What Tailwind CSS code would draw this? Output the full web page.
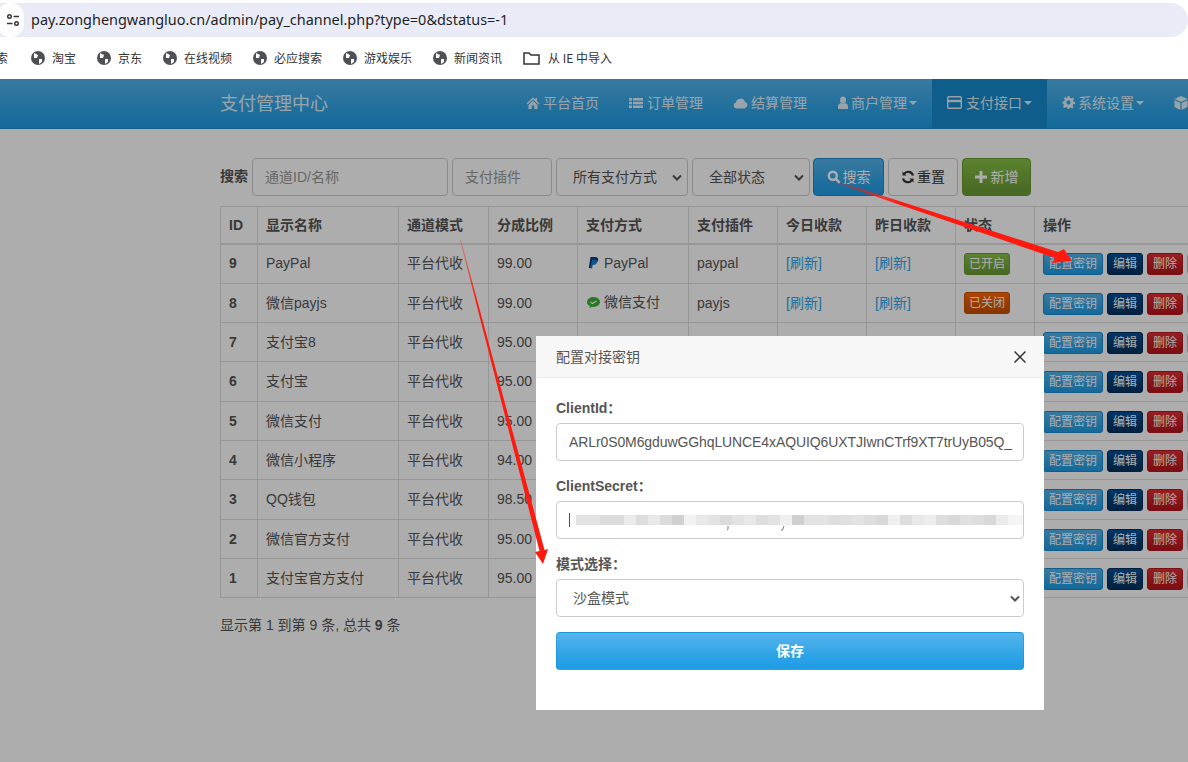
<!DOCTYPE html>
<html lang="zh">
<head>
<meta charset="utf-8">
<script src="https://cdn.jsdelivr.net/npm/@tailwindcss/browser@4"></script>
</head>
<body class="bg-white">
<div class="w-[1188px] h-[762px] overflow-hidden relative flex flex-col font-['Liberation_Sans','Noto_Sans_CJK_SC',sans-serif] text-[14px] text-[#555555]">
  <!-- browser chrome -->
  <div class="h-[79px] shrink-0 bg-white flex flex-col">
    <div class="mt-[3px] h-[34px] bg-[#e9ecf7] rounded-r-[17px] flex items-center font-['Noto_Sans','Noto_Sans_CJK_SC',sans-serif] text-[14.45px] text-[#1f1f1f]">
      <div class="w-[27px] h-[34px] -ml-[3px] bg-white rounded-full flex items-center justify-center">
        <svg class="w-[16px] h-[16px] ml-[4px]" viewBox="0 0 16 16" fill="none" stroke="#333" stroke-width="1.4"><circle cx="4.5" cy="4.5" r="1.8"/><path d="M8.5 4.5H14M2 11.5H7.5"/><circle cx="11.5" cy="11.5" r="1.8"/></svg>
      </div>
      <span class="ml-[7px]">pay.zonghengwangluo.cn/admin/pay_channel.php?type=0&amp;dstatus=-1</span>
    </div>
    <div class="h-[42px] flex items-center text-[12px] text-[#333] -ml-[2px] font-['Noto_Sans_CJK_SC',sans-serif]">
      <span class="w-[35px] -ml-[2px] shrink-0">索</span>
      <span class="flex items-center gap-[7px] w-[66px]"><svg class="w-[14px] h-[14px]" viewBox="0 0 14 14"><circle cx="7" cy="7" r="7" fill="#4d5156"/><path d="M3 2l4 2-1 3-3 0zM8 8l3 0 0 3-3 2z" fill="#fff"/></svg>淘宝</span>
      <span class="flex items-center gap-[7px] w-[66px]"><svg class="w-[14px] h-[14px]" viewBox="0 0 14 14"><circle cx="7" cy="7" r="7" fill="#4d5156"/><path d="M3 2l4 2-1 3-3 0zM8 8l3 0 0 3-3 2z" fill="#fff"/></svg>京东</span>
      <span class="flex items-center gap-[7px] w-[90px]"><svg class="w-[14px] h-[14px]" viewBox="0 0 14 14"><circle cx="7" cy="7" r="7" fill="#4d5156"/><path d="M3 2l4 2-1 3-3 0zM8 8l3 0 0 3-3 2z" fill="#fff"/></svg>在线视频</span>
      <span class="flex items-center gap-[7px] w-[90px]"><svg class="w-[14px] h-[14px]" viewBox="0 0 14 14"><circle cx="7" cy="7" r="7" fill="#4d5156"/><path d="M3 2l4 2-1 3-3 0zM8 8l3 0 0 3-3 2z" fill="#fff"/></svg>必应搜索</span>
      <span class="flex items-center gap-[7px] w-[90px]"><svg class="w-[14px] h-[14px]" viewBox="0 0 14 14"><circle cx="7" cy="7" r="7" fill="#4d5156"/><path d="M3 2l4 2-1 3-3 0zM8 8l3 0 0 3-3 2z" fill="#fff"/></svg>游戏娱乐</span>
      <span class="flex items-center gap-[7px] w-[90px]"><svg class="w-[14px] h-[14px]" viewBox="0 0 14 14"><circle cx="7" cy="7" r="7" fill="#4d5156"/><path d="M3 2l4 2-1 3-3 0zM8 8l3 0 0 3-3 2z" fill="#fff"/></svg>新闻资讯</span>
      <span class="flex items-center gap-[8px]"><svg class="w-[17px] h-[14px]" viewBox="0 0 17 14" fill="none" stroke="#333" stroke-width="1.5"><path d="M1 2h5l2 2h8v9H1z"/></svg>从 IE 中导入</span>
    </div>
  </div>
  <!-- page -->
  <div class="relative flex-1">
    <nav class="h-[50px] pl-[220px] flex items-center whitespace-nowrap bg-linear-to-b from-[#54b4eb] via-[#2fa4e7] via-60% to-[#1d9ce5] border-b border-[#178acc] text-[14px] text-white/85 font-['Noto_Sans_CJK_SC',sans-serif] [&>a]:shrink-0 [&>a]:h-full [&>a]:px-[15px] [&>a]:pb-[2px] [&>a]:flex [&>a]:items-center">
      <span class="text-[18px] w-[291px] shrink-0 pb-[3px]">支付管理中心</span>
      <a><svg class="w-[14px] h-[14px] mr-[3px]" viewBox="0 0 14 14" fill="currentColor"><path d="M7 1.5L0.5 7.5l1 1L7 3.5l5.5 5 1-1-2.5-2.3V2h-1.5v1.8zM2.5 9v4h3.2V9.5h2.6V13h3.2V9L7 4.8z"/></svg>平台首页</a>
      <a><svg class="w-[14px] h-[14px] mr-[4px]" viewBox="0 0 14 14" fill="currentColor"><path d="M0 2h3v2.4H0zM4 2h10v2.4H4zM0 5.8h3v2.4H0zM4 5.8h10v2.4H4zM0 9.6h3V12H0zM4 9.6h10V12H4z"/></svg>订单管理</a>
      <a><svg class="w-[15px] h-[14px] mr-[3px]" viewBox="0 0 15 14" fill="currentColor"><path d="M3.5 12.5a3 3 0 0 1-.6-5.9 4.6 4.6 0 0 1 8.9-.9A3.5 3.5 0 0 1 11.5 12.5z"/></svg>结算管理<i class="w-px"></i></a>
      <a><svg class="w-[10px] h-[14px] mr-[3px]" viewBox="0 0 10 14" fill="currentColor"><ellipse cx="5" cy="4" rx="3" ry="3.6"/><path d="M0 13V10c0-1.5 1.5-2.5 3-3 1 .8 3 .8 4 0 1.500.5 3 1.500 3 3v3z"/></svg>商户管理<i class="ml-[2px] w-0 h-0 border-x-[4px] border-x-transparent border-t-[4px] border-t-white/85"></i></a>
      <a class="bg-[#178acc]"><svg class="w-[15px] h-[13px] mr-[4px]" viewBox="0 0 15 13" fill="none" stroke="currentColor" stroke-width="1.400"><rect x="0.700" y="0.700" width="13.600" height="11.600" rx="1"/><path d="M1 5h13" stroke-width="2.400"/></svg>支付接口<i class="ml-[2px] w-0 h-0 border-x-[4px] border-x-transparent border-t-[4px] border-t-white/85"></i></a>
      <a><svg class="w-[13px] h-[13px] mr-[3px]" viewBox="0 0 14 14" fill="currentColor"><path fill-rule="evenodd" d="M6 0h2l.4 2 1.500.6L11.600 1.500 13 3l-1.100 1.700.6 1.400 1.500.4v2l-2 .4-.6 1.500 1.100 1.700L11 13.500l-1.700-1.100-1.300.6L7.600 14h-1.500l-.4-1.500-1.500-.6-1.700 1.100L1 11.600l1.100-1.700-.6-1.500L.5 8V6l2-.4.6-1.500L2 2.400 3.400 1l1.700 1.100L6 1.800zM7 4.700a2.300 2.300 0 1 0 0 4.600 2.300 2.300 0 0 0 0-4.600z"/></svg>系统设置<i class="ml-[2px] w-0 h-0 border-x-[4px] border-x-transparent border-t-[4px] border-t-white/85"></i></a>
      <a><svg class="w-[14px] h-[14px]" viewBox="0 0 14 14" fill="currentColor"><path d="M7 0l6.500 3L7 6 .5 3zM.5 4.200L6.400 7v7L.5 11zM13.500 4.200L7.600 7v7l5.900-3z"/></svg></a>
    </nav>
    <main class="pl-[220px] pt-[29px] w-[1400px]">
      <form class="flex items-center h-[38px] text-[14px]">
        <label class="font-bold mr-[4px] w-[28px] pb-[2px]">搜索</label>
        <div class="w-[196px] h-[38px] mr-[4px] border border-[#ccc] rounded-[4px] flex items-center pl-[12px] text-[#999]">通道ID/名称</div>
        <div class="w-[100px] h-[38px] mr-[4px] border border-[#ccc] rounded-[4px] flex items-center pl-[12px] text-[#999]">支付插件</div>
        <div class="w-[132px] h-[38px] mr-[4px] border border-[#ccc] rounded-[4px] flex items-center justify-between pl-[16px] pr-[5px]">所有支付方式<svg class="w-[10px] h-[7px]" viewBox="0 0 10 7" fill="none" stroke="#555" stroke-width="2"><path d="M1 1.500l4 4 4-4"/></svg></div>
        <div class="w-[118px] h-[38px] mr-[3px] border border-[#ccc] rounded-[4px] flex items-center justify-between pl-[16px] pr-[5px]">全部状态<svg class="w-[10px] h-[7px]" viewBox="0 0 10 7" fill="none" stroke="#555" stroke-width="2"><path d="M1 1.500l4 4 4-4"/></svg></div>
        <div class="w-[71px] h-[38px] mr-[4px] rounded-[4px] border border-[#178acc] bg-linear-to-b from-[#54b4eb] via-[#2fa4e7] via-60% to-[#1d9ce5] text-white flex items-center justify-center gap-[2px]"><svg class="w-[14px] h-[14px]" viewBox="0 0 14 14" fill="none" stroke="currentColor" stroke-width="2.400"><circle cx="5.800" cy="5.800" r="4"/><path d="M8.800 8.800l4 4"/></svg>搜索</div>
        <div class="w-[70px] h-[38px] mr-[4px] rounded-[4px] border border-[#ccc] bg-white flex items-center justify-center gap-[2px] text-[#333]"><svg class="w-[14px] h-[14px]" viewBox="0 0 14 14" fill="none" stroke="currentColor" stroke-width="2.200"><path d="M12 5.500A5 5 0 0 0 3 4M2 8.500A5 5 0 0 0 11 10"/><path d="M1.500 1.500v4h4zM12.500 12.500v-4h-4z" fill="currentColor" stroke="none"/></svg>重置</div>
        <div class="w-[69px] h-[38px] rounded-[4px] border border-[#6a9a33] bg-linear-to-b from-[#88c149] via-[#73a839] via-60% to-[#699934] text-white flex items-center justify-center gap-[4px]"><svg class="w-[12px] h-[12px]" viewBox="0 0 12 12" fill="currentColor"><path d="M4.500 0h3v4.500H12v3H7.500V12h-3V7.500H0v-3h4.500z"/></svg>新增</div>
      </form>
      <table class="mt-[10px] table-fixed border-collapse w-[1160px] [&_td]:border [&_td]:border-[#dddddd] [&_td]:pl-[8px] [&_td]:pr-0 [&_td]:py-0 [&_th]:border [&_th]:border-[#dddddd] [&_th]:border-b-2 [&_th]:pl-[8px] [&_th]:pr-0 [&_th]:pt-[2px] [&_th]:pb-0 [&_th]:text-left [&_th]:font-bold">
        <colgroup><col class="w-[37px]"><col class="w-[141px]"><col class="w-[90px]"><col class="w-[89px]"><col class="w-[111px]"><col class="w-[89px]"><col class="w-[89px]"><col class="w-[89px]"><col class="w-[79px]"><col></colgroup>
        <thead><tr class="h-[37px]"><th>ID</th><th>显示名称</th><th>通道模式</th><th>分成比例</th><th>支付方式</th><th>支付插件</th><th>今日收款</th><th>昨日收款</th><th>状态</th><th>操作</th></tr></thead>
        <tbody>
          <tr class="h-[40px]"><td class="font-bold">9</td><td>PayPal</td><td>平台代收</td><td>99.00</td><td><span class="inline-flex items-center gap-[5px] ml-[2px]"><svg class="w-[11px] h-[12px]" viewBox="0 0 11 12"><path d="M2.500 0h4.500c2.500 0 3.500 1.500 3 3.500S7.500 7 5.500 7H4L3.200 11H.8z" fill="#0a3a82"/><path d="M4 2.500h3.500c1.500.5 2 1.500 1.500 3S7 8 5.500 8H4.700l-.6 3.500H2.500z" fill="#1a7fd0"/></svg>PayPal</span></td><td>paypal</td><td><a class="text-[#2fa4e7]">[刷新]</a></td><td><a class="text-[#2fa4e7]">[刷新]</a></td><td><span class="inline-flex items-center justify-center w-[46px] h-[22px] rounded-[3px] border border-[#6a9a33] bg-linear-to-b from-[#88c149] to-[#699934] text-white text-[12px]">已开启</span></td><td><div class="flex gap-[4px] text-[12px] text-white"><a class="w-[60px] h-[22px] rounded-[3px] border border-[#178acc] bg-linear-to-b from-[#54b4eb] via-[#2fa4e7] via-60% to-[#1d9ce5] flex items-center justify-center">配置密钥</a><a class="w-[36px] h-[22px] rounded-[3px] border border-[#022f5a] bg-linear-to-b from-[#04519b] via-[#033c73] via-60% to-[#02325f] flex items-center justify-center">编辑</a><a class="w-[36px] h-[22px] rounded-[3px] border border-[#b11a1f] bg-linear-to-b from-[#e12e34] via-[#c71c22] via-60% to-[#b5151b] flex items-center justify-center">删除</a><a class="w-[36px] h-[22px] rounded-[3px] border border-[#ccc] bg-white"></a></div></td></tr>
          <tr class="h-[39px]"><td class="font-bold">8</td><td>微信payjs</td><td>平台代收</td><td>99.00</td><td><span class="inline-flex items-center gap-[4px] ml-[1px]"><svg class="w-[13px] h-[11px]" viewBox="0 0 13 11"><ellipse cx="6.500" cy="5" rx="6.500" ry="5" fill="#3cb034"/><path d="M2 11l1.500-3 2 1.500z" fill="#3cb034"/><path d="M3.500 5l2 1.500 4-2.500" fill="none" stroke="#fff" stroke-width="1.200"/></svg>微信支付</span></td><td>payjs</td><td><a class="text-[#2fa4e7]">[刷新]</a></td><td><a class="text-[#2fa4e7]">[刷新]</a></td><td class="[&]:pt-[2px]"><span class="inline-flex items-center justify-center w-[46px] h-[22px] rounded-[3px] border border-[#c94e00] bg-linear-to-b from-[#ff6707] to-[#c94e00] text-white text-[12px]">已关闭</span></td><td><div class="flex gap-[4px] pt-[2px] text-[12px] text-white"><a class="w-[60px] h-[22px] rounded-[3px] border border-[#178acc] bg-linear-to-b from-[#54b4eb] via-[#2fa4e7] via-60% to-[#1d9ce5] flex items-center justify-center">配置密钥</a><a class="w-[36px] h-[22px] rounded-[3px] border border-[#022f5a] bg-linear-to-b from-[#04519b] via-[#033c73] via-60% to-[#02325f] flex items-center justify-center">编辑</a><a class="w-[36px] h-[22px] rounded-[3px] border border-[#b11a1f] bg-linear-to-b from-[#e12e34] via-[#c71c22] via-60% to-[#b5151b] flex items-center justify-center">删除</a><a class="w-[36px] h-[22px] rounded-[3px] border border-[#ccc] bg-white"></a></div></td></tr>
          <tr class="h-[39px]"><td class="font-bold">7</td><td>支付宝8</td><td>平台代收</td><td>95.00</td><td></td><td></td><td></td><td></td><td></td><td><div class="flex gap-[4px] pt-[2px] text-[12px] text-white"><a class="w-[60px] h-[22px] rounded-[3px] border border-[#178acc] bg-linear-to-b from-[#54b4eb] via-[#2fa4e7] via-60% to-[#1d9ce5] flex items-center justify-center">配置密钥</a><a class="w-[36px] h-[22px] rounded-[3px] border border-[#022f5a] bg-linear-to-b from-[#04519b] via-[#033c73] via-60% to-[#02325f] flex items-center justify-center">编辑</a><a class="w-[36px] h-[22px] rounded-[3px] border border-[#b11a1f] bg-linear-to-b from-[#e12e34] via-[#c71c22] via-60% to-[#b5151b] flex items-center justify-center">删除</a><a class="w-[36px] h-[22px] rounded-[3px] border border-[#ccc] bg-white"></a></div></td></tr>
          <tr class="h-[40px]"><td class="font-bold">6</td><td>支付宝</td><td>平台代收</td><td>95.00</td><td></td><td></td><td></td><td></td><td></td><td><div class="flex gap-[4px] text-[12px] text-white"><a class="w-[60px] h-[22px] rounded-[3px] border border-[#178acc] bg-linear-to-b from-[#54b4eb] via-[#2fa4e7] via-60% to-[#1d9ce5] flex items-center justify-center">配置密钥</a><a class="w-[36px] h-[22px] rounded-[3px] border border-[#022f5a] bg-linear-to-b from-[#04519b] via-[#033c73] via-60% to-[#02325f] flex items-center justify-center">编辑</a><a class="w-[36px] h-[22px] rounded-[3px] border border-[#b11a1f] bg-linear-to-b from-[#e12e34] via-[#c71c22] via-60% to-[#b5151b] flex items-center justify-center">删除</a><a class="w-[36px] h-[22px] rounded-[3px] border border-[#ccc] bg-white"></a></div></td></tr>
          <tr class="h-[39px]"><td class="font-bold">5</td><td>微信支付</td><td>平台代收</td><td>95.00</td><td></td><td></td><td></td><td></td><td></td><td><div class="flex gap-[4px] pt-[2px] text-[12px] text-white"><a class="w-[60px] h-[22px] rounded-[3px] border border-[#178acc] bg-linear-to-b from-[#54b4eb] via-[#2fa4e7] via-60% to-[#1d9ce5] flex items-center justify-center">配置密钥</a><a class="w-[36px] h-[22px] rounded-[3px] border border-[#022f5a] bg-linear-to-b from-[#04519b] via-[#033c73] via-60% to-[#02325f] flex items-center justify-center">编辑</a><a class="w-[36px] h-[22px] rounded-[3px] border border-[#b11a1f] bg-linear-to-b from-[#e12e34] via-[#c71c22] via-60% to-[#b5151b] flex items-center justify-center">删除</a><a class="w-[36px] h-[22px] rounded-[3px] border border-[#ccc] bg-white"></a></div></td></tr>
          <tr class="h-[39px]"><td class="font-bold">4</td><td>微信小程序</td><td>平台代收</td><td>94.00</td><td></td><td></td><td></td><td></td><td></td><td><div class="flex gap-[4px] pt-[2px] text-[12px] text-white"><a class="w-[60px] h-[22px] rounded-[3px] border border-[#178acc] bg-linear-to-b from-[#54b4eb] via-[#2fa4e7] via-60% to-[#1d9ce5] flex items-center justify-center">配置密钥</a><a class="w-[36px] h-[22px] rounded-[3px] border border-[#022f5a] bg-linear-to-b from-[#04519b] via-[#033c73] via-60% to-[#02325f] flex items-center justify-center">编辑</a><a class="w-[36px] h-[22px] rounded-[3px] border border-[#b11a1f] bg-linear-to-b from-[#e12e34] via-[#c71c22] via-60% to-[#b5151b] flex items-center justify-center">删除</a><a class="w-[36px] h-[22px] rounded-[3px] border border-[#ccc] bg-white"></a></div></td></tr>
          <tr class="h-[40px]"><td class="font-bold">3</td><td>QQ钱包</td><td>平台代收</td><td>98.50</td><td></td><td></td><td></td><td></td><td></td><td><div class="flex gap-[4px] text-[12px] text-white"><a class="w-[60px] h-[22px] rounded-[3px] border border-[#178acc] bg-linear-to-b from-[#54b4eb] via-[#2fa4e7] via-60% to-[#1d9ce5] flex items-center justify-center">配置密钥</a><a class="w-[36px] h-[22px] rounded-[3px] border border-[#022f5a] bg-linear-to-b from-[#04519b] via-[#033c73] via-60% to-[#02325f] flex items-center justify-center">编辑</a><a class="w-[36px] h-[22px] rounded-[3px] border border-[#b11a1f] bg-linear-to-b from-[#e12e34] via-[#c71c22] via-60% to-[#b5151b] flex items-center justify-center">删除</a><a class="w-[36px] h-[22px] rounded-[3px] border border-[#ccc] bg-white"></a></div></td></tr>
          <tr class="h-[39px]"><td class="font-bold">2</td><td>微信官方支付</td><td>平台代收</td><td>95.00</td><td></td><td></td><td></td><td></td><td></td><td><div class="flex gap-[4px] pt-[2px] text-[12px] text-white"><a class="w-[60px] h-[22px] rounded-[3px] border border-[#178acc] bg-linear-to-b from-[#54b4eb] via-[#2fa4e7] via-60% to-[#1d9ce5] flex items-center justify-center">配置密钥</a><a class="w-[36px] h-[22px] rounded-[3px] border border-[#022f5a] bg-linear-to-b from-[#04519b] via-[#033c73] via-60% to-[#02325f] flex items-center justify-center">编辑</a><a class="w-[36px] h-[22px] rounded-[3px] border border-[#b11a1f] bg-linear-to-b from-[#e12e34] via-[#c71c22] via-60% to-[#b5151b] flex items-center justify-center">删除</a><a class="w-[36px] h-[22px] rounded-[3px] border border-[#ccc] bg-white"></a></div></td></tr>
          <tr class="h-[39px]"><td class="font-bold">1</td><td>支付宝官方支付</td><td>平台代收</td><td>95.00</td><td></td><td></td><td></td><td></td><td></td><td><div class="flex gap-[4px] pt-[2px] text-[12px] text-white"><a class="w-[60px] h-[22px] rounded-[3px] border border-[#178acc] bg-linear-to-b from-[#54b4eb] via-[#2fa4e7] via-60% to-[#1d9ce5] flex items-center justify-center">配置密钥</a><a class="w-[36px] h-[22px] rounded-[3px] border border-[#022f5a] bg-linear-to-b from-[#04519b] via-[#033c73] via-60% to-[#02325f] flex items-center justify-center">编辑</a><a class="w-[36px] h-[22px] rounded-[3px] border border-[#b11a1f] bg-linear-to-b from-[#e12e34] via-[#c71c22] via-60% to-[#b5151b] flex items-center justify-center">删除</a><a class="w-[36px] h-[22px] rounded-[3px] border border-[#ccc] bg-white"></a></div></td></tr>
        </tbody>
      </table>
      <p class="mt-[17px]">显示第 1 到第 9 条, 总共 <b>9</b> 条</p>
    </main>
    <!-- modal backdrop -->
    <div class="absolute inset-0 bg-black/32"></div>
    <div class="absolute left-[536px] top-[257px] w-[508px] h-[374px] bg-white">
      <div class="h-[42px] bg-[#f7f7f7] border-b border-[#eeeeee] flex items-center justify-between px-[20px]">
        <span class="font-['Noto_Sans_CJK_SC',sans-serif] text-[14px]">配置对接密钥</span>
        <svg class="w-[12px] h-[12px] mr-[-2px]" viewBox="0 0 12 12" fill="none" stroke="#333" stroke-width="1.500"><path d="M.5.5l11 11M11.500.5l-11 11"/></svg>
      </div>
      <div class="px-[20px] pt-[22px]">
        <label class="block font-bold h-[16px] leading-[16px]">ClientId：</label>
        <div class="mt-[7px] h-[38px] border border-[#ccc] rounded-[4px] pl-[12px] flex items-center overflow-hidden whitespace-nowrap tracking-[-0.1px]">ARLr0S0M6gduwGGhqLUNCE4xAQUIQ6UXTJIwnCTrf9XT7trUyB05Q_</div>
        <label class="block font-bold mt-[17px] h-[16px] leading-[16px]">ClientSecret：</label>
        <div class="relative mt-[7px] h-[38px] border border-[#ccc] rounded-[4px] pl-[12px] flex items-center overflow-hidden">
          <i class="w-px h-[14px] bg-[#555] shrink-0"></i>
          <div class="h-[10px] ml-[6px] flex items-stretch shrink-0">
            <i class="w-[12px] bg-[#e3e3e3]"></i><i class="w-[12px] bg-[#e3e3e3]"></i><i class="w-[12px] bg-[#dbdbdb]"></i><i class="w-[12px] bg-[#dbdbdb]"></i><i class="w-[12px] bg-[#ebebeb]"></i><i class="w-[12px] bg-[#dddddd]"></i><i class="w-[12px] bg-[#e8e8e8]"></i><i class="w-[12px] bg-[#dbdbdb]"></i><i class="w-[12px] bg-[#d0d0d0]"></i><i class="w-[12px] bg-[#f2f2f2]"></i><i class="w-[12px] bg-[#e8e8e8]"></i><i class="w-[12px] bg-[#e3e3e3]"></i><i class="w-[12px] bg-[#dbdbdb]"></i><i class="w-[12px] bg-[#e3e3e3]"></i><i class="w-[12px] bg-[#e8e8e8]"></i><i class="w-[12px] bg-[#dedede]"></i><i class="w-[12px] bg-[#e3e3e3]"></i><i class="w-[12px] bg-[#f0f0f0]"></i><i class="w-[12px] bg-[#cfcfcf]"></i><i class="w-[12px] bg-[#e3e3e3]"></i><i class="w-[12px] bg-[#e3e3e3]"></i><i class="w-[12px] bg-[#dedede]"></i><i class="w-[12px] bg-[#e0e0e0]"></i><i class="w-[12px] bg-[#e3e3e3]"></i><i class="w-[12px] bg-[#dddddd]"></i><i class="w-[12px] bg-[#d8d8d8]"></i><i class="w-[12px] bg-[#f0f0f0]"></i><i class="w-[12px] bg-[#dddddd]"></i><i class="w-[12px] bg-[#e8e8e8]"></i><i class="w-[12px] bg-[#ededed]"></i><i class="w-[12px] bg-[#dddddd]"></i><i class="w-[12px] bg-[#d8d8d8]"></i><i class="w-[12px] bg-[#e0e0e0]"></i><i class="w-[12px] bg-[#dedede]"></i><i class="w-[12px] bg-[#d8d8d8]"></i><i class="w-[12px] bg-[#ebebeb]"></i><i class="w-[12px] bg-[#f5f5f5]"></i><i class="w-[12px] bg-[#f5f5f5]"></i>
          </div>
          <svg class="absolute left-[170px] top-[24px] w-[60px] h-[5px]" viewBox="0 0 60 5" fill="none" stroke="#777" stroke-width="1"><path d="M1 0v2.500q0 1.500-1 1.500M57 0l-1.500 4h-1.500"/></svg>
        </div>
        <label class="block font-bold mt-[17px] h-[16px] leading-[16px]">模式选择：</label>
        <div class="mt-[7px] h-[38px] border border-[#ccc] rounded-[4px] pl-[16px] pr-[3px] flex items-center justify-between">沙盒模式<svg class="w-[10px] h-[7px]" viewBox="0 0 10 7" fill="none" stroke="#555" stroke-width="2"><path d="M1 1.500l4 4 4-4"/></svg></div>
        <div class="mt-[15px] h-[38px] rounded-[4px] border border-[#178acc]/50 bg-linear-to-b from-[#54b4eb] via-[#2fa4e7] via-60% to-[#1d9ce5] text-white font-bold flex items-center justify-center">保存</div>
      </div>
    </div>
    <!-- annotation arrows -->
    <svg class="absolute left-0 top-0 w-[1188px] h-[683px] pointer-events-none" viewBox="0 79 1188 683">
      <defs>
        <linearGradient id="fade1" gradientUnits="userSpaceOnUse" x1="840" y1="182" x2="900" y2="202"><stop offset="0" stop-color="#ff1a10" stop-opacity="0.25"/><stop offset="1" stop-color="#ff1a10"/></linearGradient>
        <linearGradient id="fade2" gradientUnits="userSpaceOnUse" x1="460" y1="240" x2="476" y2="300"><stop offset="0" stop-color="#ff1a10" stop-opacity="0.25"/><stop offset="1" stop-color="#ff1a10"/></linearGradient>
      </defs>
      <polygon points="840,182 1058,252 1064,249 1072,261 1052,263 1055,258 839,184" fill="url(#fade1)"/>
      <polygon points="460,240 461,240 544.5,550 548,549 543,564 535,552 539.5,551" fill="url(#fade2)"/>
    </svg>
  </div>
</div>
</body>
</html>
